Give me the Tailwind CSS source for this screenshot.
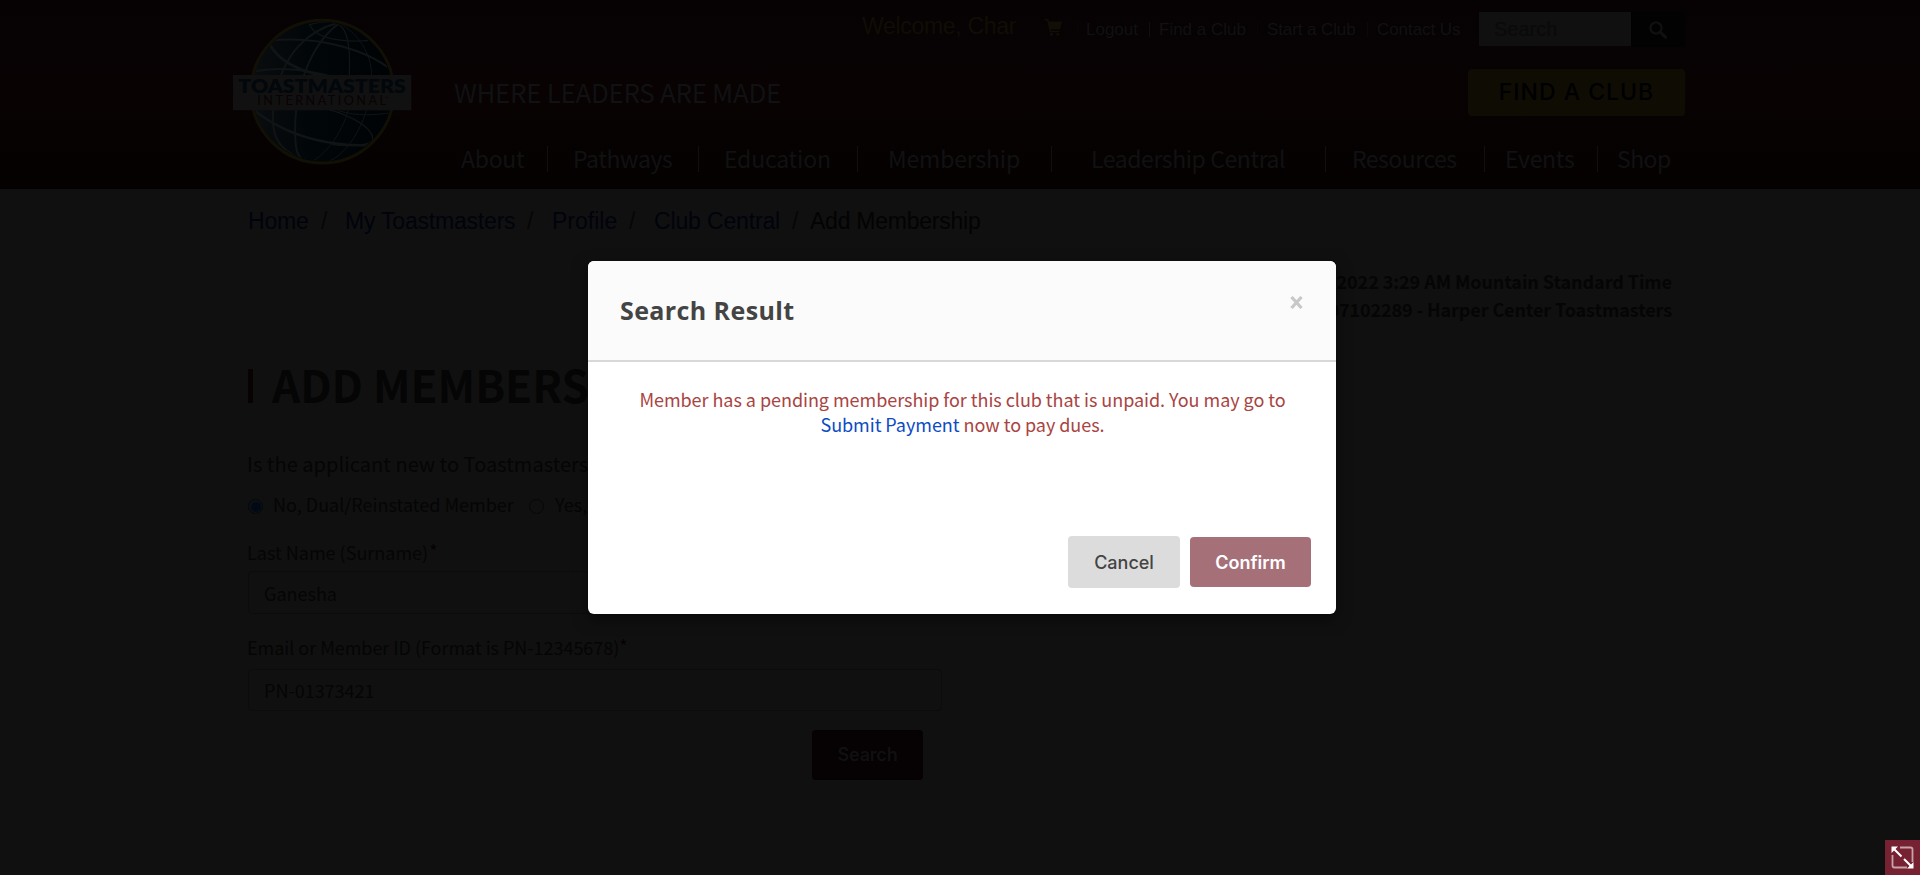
<!DOCTYPE html>
<html lang="en">
<head>
<meta charset="utf-8">
<title>Add Membership</title>
<script src="https://cdn.jsdelivr.net/npm/@tailwindcss/browser@4"></script>
</head>
<body class="relative h-[875px] overflow-hidden bg-[#101010] font-['Noto_Sans_CJK_SC',sans-serif] text-lg text-[#050505]">

<header class="flex h-[189px] bg-linear-to-b from-[#060203] via-[#080203] to-[#050101] pl-[225px] text-[#101112]">
  <svg class="mt-[10px] h-[165px] w-[200px] shrink-0" viewBox="0 0 600 495">
    <defs>
      <linearGradient id="globe"><stop offset="0" stop-color="#0a0d0f"/><stop offset=".4" stop-color="#010609"/><stop offset="1" stop-color="#000305"/></linearGradient>
      <clipPath id="disc"><circle cx="292" cy="245" r="208"/></clipPath>
    </defs>
    <circle cx="292" cy="245" r="214" fill="url(#globe)" stroke="#121005" stroke-width="9"/>
    <g clip-path="url(#disc)" fill="none" stroke="#111415" stroke-width="6">
      <path d="M340 38C250 60 175 130 150 260S170 420 240 455" />
      <path d="M345 38C270 90 215 210 211 330S225 440 240 455"/>
      <path d="M325 38C360 40 378 90 373 195" stroke-width="4"/>
      <path d="M340 38C400 70 440 130 440 200C440 320 370 440 300 458" stroke-width="3"/>
      <path d="M370 300C350 370 300 440 250 460" stroke-width="3"/>
      <path d="M252 38C262 80 330 98 430 92M252 45C280 35 310 34 340 38" stroke-width="4"/>
      <path d="M135 92C280 75 430 120 505 185" stroke-width="6"/>
      <path d="M135 105C160 150 210 180 300 200" stroke-width="8"/>
      <path d="M85 185C180 165 280 185 370 215"/>
      <path d="M90 302C200 390 340 410 440 405" stroke-width="8"/>
      <path d="M310 298C390 320 450 360 442 392C430 410 350 408 320 403" stroke-width="4"/>
      <path d="M340 302C400 320 450 315 500 308" stroke-width="3"/>
    </g>
    <rect x="24" y="195" width="535" height="106" fill="#111111"/>
    <text x="40" y="249" textLength="502" lengthAdjust="spacingAndGlyphs" font-family="Lato, sans-serif" font-weight="800" font-size="55" fill="#01070b">TOASTMASTERS</text>
    <text x="97" y="286" textLength="386" font-family="Lato, sans-serif" font-size="38" fill="#0a0204">INTERNATIONAL</text>
    <circle cx="485" cy="262" r="2" fill="#0a0204"/>
  </svg>

  <div class="ml-[29px] w-[1231px]">
    <div class="flex h-[57px] items-start justify-end pt-[12px] font-['Liberation_Sans',Arial,sans-serif] text-[17px] leading-[32px]">
      <span class="mr-[29px] mt-[-2px] w-[154px] whitespace-nowrap text-[23px] tracking-[-0.3px] text-[#100d05]">Welcome, Char</span>
      <svg class="mr-[15px] mt-[7px] h-[17px] w-[17px] shrink-0" viewBox="0 0 17 17" fill="#110f05"><path d="M0 0h3.4l.6 2.6h13L15 10.300H5.600l.3 1.400H14.500v1.500H4.700L2.200 1.400H0z"/><circle cx="6.500" cy="15.300" r="1.500"/><circle cx="12.800" cy="15.300" r="1.500"/></svg>
      <nav class="mt-[10px] flex whitespace-nowrap leading-[15px]">
        <a class="w-[72px] border-l border-[#090506] pl-[8px]">Logout</a>
        <a class="w-[108px] border-l border-[#0e0e0e] pl-[9px]">Find a Club</a>
        <a class="w-[110px] border-l border-[#090506] pl-[9px] tracking-[-0.1px]">Start a Club</a>
        <a class="w-[112px] border-l border-[#0b0809] pl-[9px] tracking-[-0.06px]">Contact Us</a>
      </nav>
      <div class="flex">
        <div class="h-[34px] w-[152px] bg-[#0f100f] pl-[15px] text-[20px] leading-[34px] text-[#090a09]">Search</div>
        <div class="flex h-[35px] w-[54px] items-center justify-center bg-[#020202]">
          <svg class="h-[18px] w-[18px]" viewBox="0 0 18 18" fill="none" stroke="#101010" stroke-width="2.400"><circle cx="7" cy="7" r="5.600"/><path d="M11.200 11.200l5.300 5" stroke-width="3.200" stroke-linecap="round"/></svg>
        </div>
      </div>
    </div>

    <div class="mt-[12px] flex h-[47px] items-center justify-between">
      <div class="text-[26px] leading-[46px] tracking-[-0.33px] -mt-px">WHERE LEADERS ARE MADE</div>
      <div class="flex h-[47px] w-[217px] items-center justify-center rounded bg-[#0f0c04] font-[Inter,sans-serif] text-[23px] font-medium tracking-[1px] text-black">FIND A CLUB</div>
    </div>

    <nav class="mt-[30px] flex whitespace-nowrap text-[23px] leading-[24px]">
      <a class="h-[26px] w-[94px] border-r border-[#101010] pl-[7px] tracking-[-0.27px]">About</a>
      <a class="h-[26px] w-[151px] border-r border-[#101010] pl-[25px] tracking-[-0.4px]">Pathways</a>
      <a class="h-[26px] w-[159px] border-r border-[#101010] pl-[25px] tracking-[-0.2px]">Education</a>
      <a class="h-[26px] w-[194px] border-r border-[#101010] pl-[30px] tracking-[-0.17px]">Membership</a>
      <a class="h-[26px] w-[274px] border-r border-[#101010] pl-[39px] tracking-[-0.42px]">Leadership Central</a>
      <a class="h-[26px] w-[159px] border-r border-[#101010] pl-[26px] tracking-[-0.5px]">Resources</a>
      <a class="h-[26px] w-[113px] border-r border-[#101010] pl-[20px] tracking-[-0.28px]">Events</a>
      <a class="h-[26px] pl-[19px] tracking-[-0.54px]">Shop</a>
    </nav>
  </div>
</header>

<main class="pl-[248px]">
  <ol class="flex h-[64px] whitespace-nowrap font-['Liberation_Sans',Arial,sans-serif] text-[23px] leading-[65px] text-[#01030c]">
    <li class="w-[73px] tracking-[-0.2px]">Home</li><li class="w-[24px] text-[#050607]">/</li>
    <li class="w-[182px] tracking-[-0.2px]">My Toastmasters</li><li class="w-[25px] text-[#050607]">/</li>
    <li class="w-[77px]">Profile</li><li class="w-[25px] text-[#050607]">/</li>
    <li class="w-[138px] tracking-[-0.15px]">Club Central</li><li class="w-[18px] text-[#050607]">/</li>
    <li class="tracking-[-0.24px] text-[#030303]">Add Membership</li>
  </ol>
  <div class="mt-[14px] w-[1424px] text-right font-bold leading-[28px]">
    <p class="tracking-[-0.07px]">2022 3:29 AM Mountain Standard Time</p>
    <p class="tracking-[-0.11px]">07102289 - Harper Center Toastmasters</p>
  </div>
  <h1 class="mt-[46px] flex h-[34px] items-center border-l-5 border-[#080203] pl-[19px] text-[44px] font-bold leading-[34px]"><span class="-mt-[5px]">ADD MEMBERSHIP</span></h1>

  <form class="w-[694px] leading-[24px]">
    <p class="mt-[49px] -ml-px whitespace-nowrap text-[20px] tracking-[0.05px]">Is the applicant new to Toastmasters?</p>
    <div class="mt-[16px] flex h-[24px] items-center whitespace-nowrap">
      <span class="mt-[5px] flex h-[15px] w-[15px] items-center justify-center rounded-full border border-[#010810]"><span class="h-[10px] w-[10px] rounded-full bg-[#010a14]"></span></span>
      <span class="ml-[10px] w-[256px]">No, Dual/Reinstated Member</span>
      <span class="mt-[5px] h-[15px] w-[15px] rounded-full border border-[#070707]"></span>
      <span class="ml-[11px]">Yes,</span>
    </div>
    <label class="mt-[24px] flex h-[24px] -ml-px">Last Name (Surname)<span class="ml-px -mt-[2px] text-[#080102]">*</span></label>
    <div class="mt-[7px] h-[43px] rounded border border-[#0c0c0c] pl-[15px] leading-[42px]">Ganesha</div>
    <label class="mt-[21px] flex h-[24px] -ml-px tracking-[-0.03px]">Email or Member ID (Format is PN-12345678)<span class="-mt-[2px] text-[#080102]">*</span></label>
    <div class="mt-[10px] h-[42px] rounded border border-[#0c0c0c] pl-[15px] leading-[40px]">PN-01373421</div>
    <div class="mt-[19px] flex justify-end pr-[19px]">
      <div class="flex h-[50px] w-[111px] items-center justify-center rounded bg-[#060103] font-[Inter,sans-serif] font-semibold tracking-[-0.2px] text-[#101010]">Search</div>
    </div>
  </form>
</main>

<div class="absolute left-[588px] top-[261px] flex h-[353px] w-[748px] flex-col overflow-visible rounded-md bg-white shadow-[0_5px_15px_rgba(0,0,0,0.5)]">
  <div class="flex h-[101px] justify-between rounded-t-md border-b-2 border-[#d8d8d8] bg-[#fbfbfb] pl-[32px] pr-[33px]">
    <h2 class="mt-[33px] font-['Open_Sans','Noto_Sans',sans-serif] text-[25px] font-bold leading-[32px] tracking-[0.4px] text-[#444444]">Search Result</h2>
    <svg class="mt-[35px] h-[13px] w-[13px]" viewBox="0 0 13 13" stroke="#c8c8c8" stroke-width="3.200"><path d="M1.500 1l10 11M11.500 1l-10 11"/></svg>
  </div>
  <p class="mt-[25px] pl-[51px] pr-[50px] text-center leading-[25px] tracking-[-0.04px] text-[#a94442]">Member has a pending membership for this club that is unpaid. You may go to <a class="text-[#0b4bc4]">Submit Payment</a> now to pay dues.</p>
  <div class="mt-auto mb-[26px] flex items-center justify-end gap-[10px] pr-[25px] font-[Inter,sans-serif]">
    <div class="flex h-[52px] w-[112px] items-center justify-center rounded bg-[#dcdcdc] pt-[2px] font-medium text-[#444444]">Cancel</div>
    <div class="flex h-[50px] w-[121px] items-center justify-center rounded bg-[#a67079] pt-[2px] font-semibold text-white">Confirm</div>
  </div>
</div>

<div class="absolute bottom-0 right-0 flex h-[35px] w-[35px] items-center justify-center bg-[#762233]">
  <svg class="h-[23px] w-[23px]" viewBox="0 0 23 23" fill="none" stroke="#ffffff">
    <path d="M9 1.500h10.500q2 0 2 2V16M1.500 9v10.500q0 2 2 2H16" stroke="#c9a3aa" stroke-width="1.800"/>
    <path d="M2.500 2.500l8 8M13 13l8 8" stroke-width="2"/>
    <path d="M0.500 0.500h6.500l-6.500 6.500zM22.500 22.500h-6.500l6.500-6.500z" fill="#ffffff" stroke="none"/>
  </svg>
</div>
</body>
</html>
